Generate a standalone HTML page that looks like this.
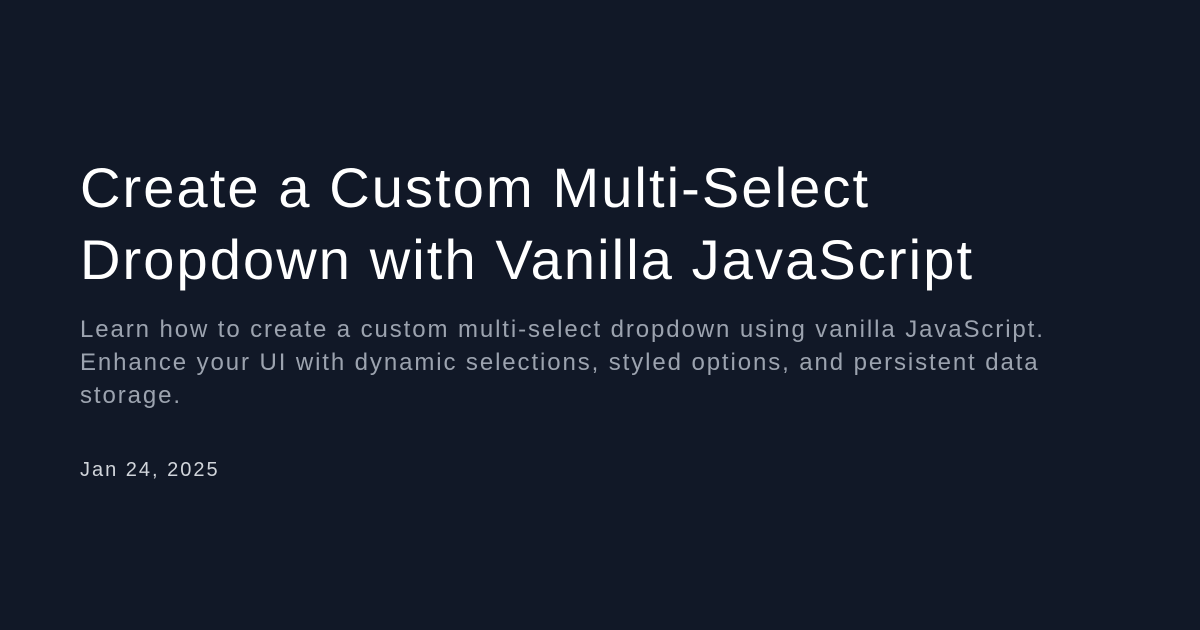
<!DOCTYPE html>
<html><head><meta charset="utf-8"><style>
html,body{margin:0;padding:0;}
body{width:1200px;height:630px;background:#111827;font-family:"Liberation Sans",sans-serif;position:relative;overflow:hidden;}
h1{position:absolute;left:80px;top:152px;margin:0;width:1100px;color:#fff;font-weight:400;font-size:56px;line-height:72px;letter-spacing:2.1px;white-space:nowrap;}
p{position:absolute;left:80px;top:313px;margin:0;width:1100px;color:#9ca3af;font-size:24px;line-height:33px;letter-spacing:1.9px;white-space:nowrap;}
.d{position:absolute;left:80px;top:456px;color:#d1d5db;font-size:20px;line-height:28px;letter-spacing:2px;}
</style></head><body>
<h1>Create a Custom Multi-Select<br>Dropdown with Vanilla JavaScript</h1>
<p>Learn how to create a custom multi-select dropdown using vanilla JavaScript.<br>Enhance your UI with dynamic selections, styled options, and persistent data<br>storage.</p>
<div class="d">Jan 24, 2025</div>
</body></html>
